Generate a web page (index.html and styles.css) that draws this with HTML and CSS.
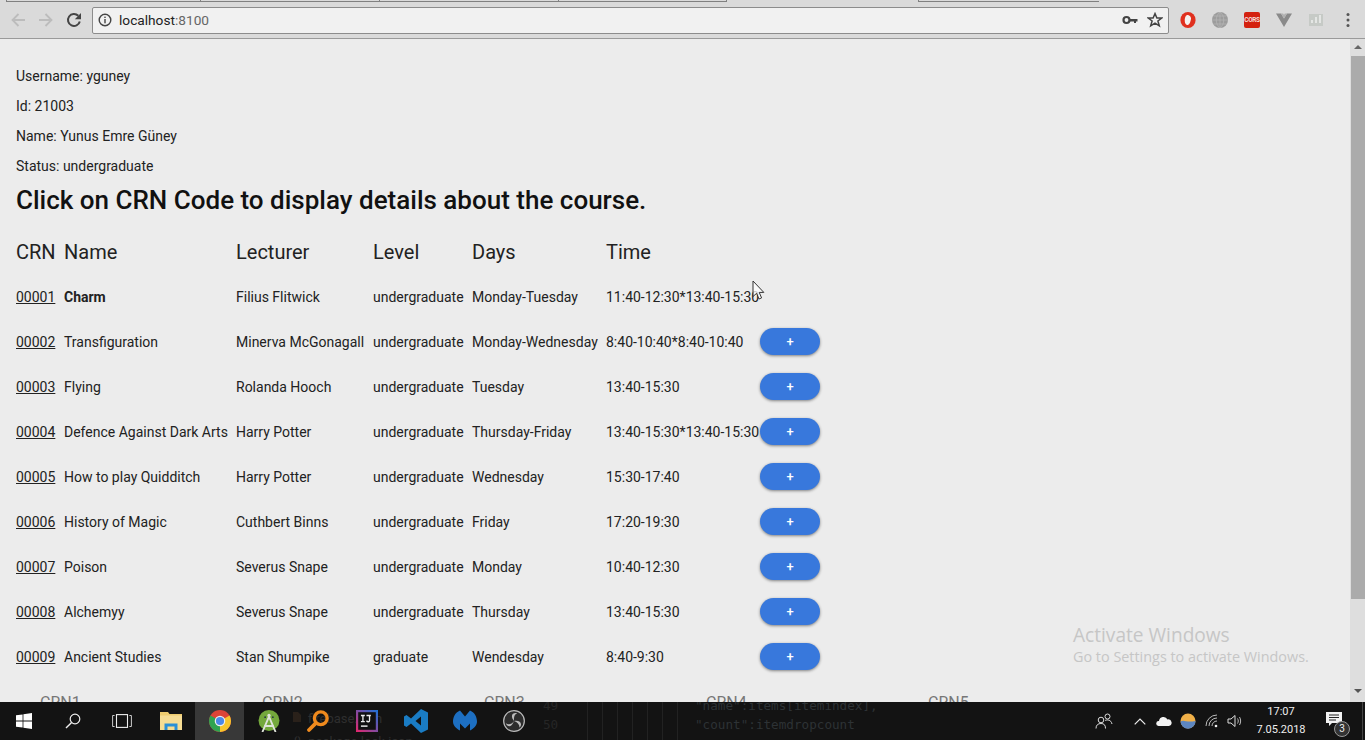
FILE: index.html
```html
<!DOCTYPE html>
<html>
<head>
  <title>Courses</title>
  <link rel="stylesheet" href="styles.css">
</head>
<body>
  <div class="tabstrip">
    <span class="tab tab-first"></span><span class="tab tab-wide"></span><span class="tab tab-wide"></span><span class="tab tab-short"></span>
    <span class="tab tab-last"></span>
  </div>

  <!-- browser toolbar -->
  <div class="toolbar">
    <div class="nav">
      <svg class="nav-icon" viewBox="0 0 16 16"><path d="M15 8H2.500M8.500 2L2.500 8L8.500 14" fill="none" stroke="#bcbcbc" stroke-width="1.800"/></svg>
      <svg class="nav-icon" viewBox="0 0 16 16"><path d="M1 8H13.500M7.500 2L13.500 8L7.500 14" fill="none" stroke="#bcbcbc" stroke-width="1.800"/></svg>
      <svg class="nav-icon" viewBox="0 0 16 16"><path d="M13.800 9.500A6 6 0 1 1 12.300 3.800" fill="none" stroke="#444" stroke-width="2"/><path d="M15 1V7.200H8.800Z" fill="#444"/></svg>
    </div>
    <div class="omnibox">
      <svg class="info-icon" viewBox="0 0 14 14"><circle cx="7" cy="7" r="5.800" fill="none" stroke="#444" stroke-width="1.400"/><rect x="6.300" y="6" width="1.400" height="4.300" fill="#444"/><rect x="6.300" y="3.600" width="1.400" height="1.400" fill="#444"/></svg>
      <span class="host">localhost</span><span class="port">:8100</span>
      <span class="omni-space"></span>
      <svg class="key-icon" viewBox="0 0 16 10"><circle cx="4.500" cy="5" r="3" fill="none" stroke="#444" stroke-width="2.200"/><path d="M7.500 4H15.500V6.500H14V8H12V6.500H7.500Z" fill="#444"/></svg>
      <svg class="star-icon" viewBox="0 0 16 16"><path d="M8 1.600L9.900 6H14.700L10.900 9L12.300 13.900L8 11.100L3.700 13.900L5.100 9L1.300 6H6.100Z" fill="none" stroke="#444" stroke-width="1.500"/></svg>
    </div>
    <div class="extensions">
      <svg class="ext" viewBox="0 0 16 16"><ellipse cx="8" cy="8" rx="7.600" ry="8" fill="#e0301e"/><path d="M7 3C5 4 4.500 7 4.800 9.500C5 12 6.500 13.500 8 13C10 12 10.500 9 11 7C11.500 5 9 2.500 7 3Z" fill="#f6f1ee"/></svg>
      <svg class="ext" viewBox="0 0 16 16"><circle cx="8" cy="8" r="8" fill="#9c9c9c"/><path d="M0 8H16M1.500 4H14.500M1.500 12H14.500M8 0V16M8 0C3 4 3 12 8 16M8 0C13 4 13 12 8 16" fill="none" stroke="#b8b8b8" stroke-width=".7"/></svg>
      <span class="cors">CORS</span>
      <svg class="ext" viewBox="0 0 16 16"><path d="M0 1.500H5L8 6.500L11 1.500H16L8 15Z" fill="#8a8a8a"/><path d="M5 1.500H7.200L8 3L8.800 1.500H11L8 6.500Z" fill="#b0b0b0"/></svg>
      <svg class="ext" viewBox="0 0 16 16"><rect x="1" y="2" width="14" height="12" fill="#c6cac6"/><path d="M3 11V8H5V11ZM7 11V5H9V11ZM11 11V3H13V11Z" fill="#e4e6e4"/></svg>
      <svg class="menu-dots" viewBox="0 0 4 16"><circle cx="2" cy="2.500" r="1.500" fill="#555"/><circle cx="2" cy="8" r="1.500" fill="#555"/><circle cx="2" cy="13.500" r="1.500" fill="#555"/></svg>
    </div>
  </div>

  <div class="viewport">
    <div class="content">
      <p class="info">Username: yguney</p>
      <p class="info">Id: 21003</p>
      <p class="info">Name: Yunus Emre Güney</p>
      <p class="info">Status: undergraduate</p>
      <h1 class="title">Click on CRN Code to display details about the course.</h1>

      <div class="course-grid head">
        <div>CRN</div><div>Name</div><div>Lecturer</div><div>Level</div><div>Days</div><div>Time</div><div></div>
      </div>

      <div class="course-grid row">
        <a class="crn" href="#">00001</a><div class="bold">Charm</div><div>Filius Flitwick</div><div>undergraduate</div><div>Monday-Tuesday</div><div class="nowrap">11:40-12:30*13:40-15:30</div><div></div>
      </div>
      <div class="course-grid row">
        <a class="crn" href="#">00002</a><div>Transfiguration</div><div>Minerva McGonagall</div><div>undergraduate</div><div>Monday-Wednesday</div><div class="nowrap">8:40-10:40*8:40-10:40</div><button class="add">+</button>
      </div>
      <div class="course-grid row">
        <a class="crn" href="#">00003</a><div>Flying</div><div>Rolanda Hooch</div><div>undergraduate</div><div>Tuesday</div><div>13:40-15:30</div><button class="add">+</button>
      </div>
      <div class="course-grid row">
        <a class="crn" href="#">00004</a><div>Defence Against Dark Arts</div><div>Harry Potter</div><div>undergraduate</div><div>Thursday-Friday</div><div class="nowrap">13:40-15:30*13:40-15:30</div><button class="add">+</button>
      </div>
      <div class="course-grid row">
        <a class="crn" href="#">00005</a><div>How to play Quidditch</div><div>Harry Potter</div><div>undergraduate</div><div>Wednesday</div><div>15:30-17:40</div><button class="add">+</button>
      </div>
      <div class="course-grid row">
        <a class="crn" href="#">00006</a><div>History of Magic</div><div>Cuthbert Binns</div><div>undergraduate</div><div>Friday</div><div>17:20-19:30</div><button class="add">+</button>
      </div>
      <div class="course-grid row">
        <a class="crn" href="#">00007</a><div>Poison</div><div>Severus Snape</div><div>undergraduate</div><div>Monday</div><div>10:40-12:30</div><button class="add">+</button>
      </div>
      <div class="course-grid row">
        <a class="crn" href="#">00008</a><div>Alchemyy</div><div>Severus Snape</div><div>undergraduate</div><div>Thursday</div><div>13:40-15:30</div><button class="add">+</button>
      </div>
      <div class="course-grid row">
        <a class="crn" href="#">00009</a><div>Ancient Studies</div><div>Stan Shumpike</div><div>graduate</div><div>Wendesday</div><div>8:40-9:30</div><button class="add">+</button>
      </div>

      <div class="drop-head">
        <span>CRN1</span><span>CRN2</span><span>CRN3</span><span>CRN4</span><span>CRN5</span>
      </div>
    </div>

    <div class="scrollbar">
      <span class="arrow-up"></span>
      <div class="thumb"></div>
      <span class="arrow-down"></span>
    </div>

    <!-- things lying over the page -->
    <svg class="cursor" viewBox="0 0 13 21"><path d="M1 1V16.500L4.600 13.300L7 19L9.600 17.900L7.200 12.400H11.800Z" fill="#fff" fill-opacity=".75" stroke="#333"/></svg>
    <div class="activate">
      <div class="activate-big">Activate Windows</div>
      <div class="activate-small">Go to Settings to activate Windows.</div>
    </div>
  </div>

  <div class="taskbar">
    <!-- the editor window shows through the taskbar -->
    <svg class="ghost-folder" viewBox="0 0 8 10"><path d="M0 0H5L8 3V10H0Z" fill="#2a211a"/></svg>
    <div class="behind behind-files">
      <div class="ghost-indent">firebase.json</div>
      <div>{} &nbsp;package-lock.json</div>
    </div>
    <div class="behind behind-lines">
      <div>49</div>
      <div>50</div>
    </div>
    <div class="behind-guides"></div>
    <div class="behind behind-code">
      <div>"name":items[itemindex],</div>
      <div>"count":itemdropcount</div>
    </div>

    <div class="task-left">
      <div class="task-cell">
        <svg class="win-logo" viewBox="0 0 16 16"><path d="M0 2.300L6.600 1.400V7.600H0ZM7.400 1.300L16 0V7.600H7.400ZM0 8.400H6.600V14.600L0 13.700ZM7.400 8.400H16V16L7.400 14.700Z" fill="#fff"/></svg>
      </div>
      <div class="task-cell">
        <svg class="search" viewBox="0 0 16 16"><circle cx="10" cy="6" r="4.800" fill="none" stroke="#eee" stroke-width="1.200"/><path d="M6.600 9.400L1 15" stroke="#eee" stroke-width="1.400"/></svg>
      </div>
      <div class="task-cell">
        <svg class="taskview" viewBox="0 0 20 14"><rect x="4.500" y=".6" width="11" height="12.800" fill="none" stroke="#eee" stroke-width="1.100"/><path d="M2.600 1.500H.6V12.500H2.600M17.400 1.500H19.400V12.500H17.400" fill="none" stroke="#ccc"/></svg>
      </div>
      <div class="task-cell">
        <svg class="folder" viewBox="0 0 22 18"><path d="M0 0H8L9.500 2H22V18H0Z" fill="#eecb6e"/><rect y="3.500" width="22" height="14.500" fill="#f6dc93"/><path d="M4.500 18V11.500H17.500V18H14.500V14.500H7.500V18Z" fill="#2a8fd6"/></svg>
      </div>
      <div class="task-cell task-active">
        <svg class="app-big" viewBox="0 0 20 20"><circle cx="10" cy="10" r="10" fill="#db4437"/><path d="M10 10L1.340 5A10 10 0 0 0 10 20Z" fill="#2fa350"/><path d="M10 10L10 20A10 10 0 0 0 18.660 5Z" fill="#f7c52c"/><circle cx="10" cy="10" r="4.800" fill="#eee"/><circle cx="10" cy="10" r="3.700" fill="#4a88e8"/></svg>
      </div>
      <div class="task-cell">
        <svg class="app-big" viewBox="0 0 20 20"><circle cx="10" cy="9.500" r="9.500" fill="#74a83c"/><path d="M10 6L4 20M10 6L16 20M5.500 14.500H14.500" fill="none" stroke="#dfe3da" stroke-width="1.700"/><circle cx="10" cy="5" r="1.500" fill="#dfe3da"/><circle cx="6.500" cy="6.500" r=".8" fill="#234"/><circle cx="13.500" cy="6.500" r=".8" fill="#234"/></svg>
      </div>
      <div class="task-cell">
        <svg class="app-big" viewBox="0 0 20 20"><circle cx="12.500" cy="7.500" r="5.800" fill="none" stroke="#f08a1d" stroke-width="3"/><path d="M7.800 12.200L1.800 18.200" stroke="#f08a1d" stroke-width="3.400" stroke-linecap="round"/></svg>
      </div>
      <div class="task-cell">
        <svg class="app-big" viewBox="0 0 20 20"><defs><linearGradient id="ij" x1="0" y1="1" x2="1" y2="0"><stop offset="0" stop-color="#e6246a"/><stop offset="1" stop-color="#1a73d8"/></linearGradient></defs><rect width="20" height="20" fill="url(#ij)"/><rect x="2" y="2" width="16" height="16" fill="#111"/><rect x="4.500" y="14" width="6" height="1.300" fill="#eee"/><path d="M4.500 5H8M6.300 5V10.500M4.500 10.500H8M9.500 5H13.500M12.300 5V9.500C12.300 11 10.500 11 9.500 9.800" fill="none" stroke="#eee" stroke-width="1.200"/></svg>
      </div>
      <div class="task-cell">
        <svg class="app-vs" viewBox="0 0 24 24"><path d="M17 0L24 3.500V20.500L17 24L7 14.500L2.500 18L0 16.500V7.500L2.500 6L7 9.500ZM17 7.500L11.500 12L17 16.500Z" fill="#1a7cc4"/></svg>
      </div>
      <div class="task-cell">
        <svg class="app-vs" viewBox="0 0 24 21"><path d="M7 0C2 2 0 7 0 11C0 15 3 18 7 20V13L12 18L17 13V20C21 18 24 15 24 11C24 7 22 2 17 0L12 6Z" fill="#1d6fc2"/></svg>
      </div>
      <div class="task-cell">
        <svg class="app-big" viewBox="0 0 20 20"><circle cx="10" cy="10" r="9.400" fill="#2c2c2c" stroke="#bbb" stroke-width="1.100"/><path d="M10 10C6 5 9 2 13 3C10 4 10 7 10 10ZM10 10C16 9 18 13 15 16C15 13 13 11 10 10ZM10 10C8 16 4 16 2.500 12C5 14 8 13 10 10Z" fill="#bbb"/></svg>
      </div>
    </div>

    <div class="tray">
      <svg class="tray-people" viewBox="0 0 18 16"><circle cx="6" cy="7" r="2.800" fill="none" stroke="#ddd"/><path d="M1 15.500C1 12 3 10.500 6 10.500C9 10.500 10.500 12 10.500 15.500" fill="none" stroke="#ddd"/><circle cx="12.500" cy="3.500" r="2.500" fill="none" stroke="#ddd"/><path d="M10 7.500C12 6.500 16 6.500 17 11" fill="none" stroke="#ddd"/></svg>
      <svg class="tray-chevron" viewBox="0 0 12 7"><path d="M.7 6.300L6 1L11.300 6.300" fill="none" stroke="#eee" stroke-width="1.200"/></svg>
      <svg class="tray-cloud" viewBox="0 0 16 10"><path d="M2.500 10A2.500 2.500 0 0 1 3 5A4.500 4.500 0 0 1 11.500 3.500A3.300 3.300 0 0 1 13 10Z" fill="#f2f2f2"/></svg>
      <svg class="tray-ball" viewBox="0 0 16 16"><circle cx="8" cy="8" r="7.500" fill="#f0b048"/><path d="M.5 8.500C4 6 6 10 15.500 8A7.500 7.500 0 0 1 .5 8.500Z" fill="#5d86c0"/></svg>
      <svg class="tray-wifi" viewBox="0 0 16 14"><path d="M1 12A11 11 0 0 1 12 1M4 12A8 8 0 0 1 12 4M7 12A5 5 0 0 1 12 7" fill="none" stroke="#bbb"/><circle cx="11" cy="12" r="1.300" fill="#eee"/></svg>
      <svg class="tray-sound" viewBox="0 0 16 14"><path d="M1 5H4L8 1.500V12.500L4 9H1Z" fill="none" stroke="#ddd"/><path d="M10.500 4.500C11.500 6 11.500 8 10.500 9.500M12.500 3C14 5.500 14 8.500 12.500 11" fill="none" stroke="#bbb"/></svg>
      <div class="clock"><div>17:07</div><div>7.05.2018</div></div>
      <div class="notify">
        <svg class="notify-icon" viewBox="0 0 16 14"><path d="M0 0H16V11H6L3 14V11H0Z" fill="#f2f2f2"/><path d="M3 3H13M3 5.500H13M3 8H10" stroke="#222"/></svg>
        <span class="notify-badge">3</span>
      </div>
    </div>
  </div>
</body>
</html>
```

FILE: styles.css
```css
/* Global styles */
html, body {
  height: 100%;
}

body {
  margin: 0;
  display: flex;
  flex-direction: column;
  height: 740px;
  overflow: hidden;
  background-color: #ececec;
  color: #222;
  font-family: Roboto, "Liberation Sans", sans-serif;
  font-size: 14px;
}

/* top of the browser */
.tabstrip {
  height: 2px;
  background-color: #dadada;
  display: flex;
}

.tab {
  display: block;
  height: 1px;
  box-sizing: content-box;
  border-bottom: 1px solid #808080;
  border-right: 1px solid #808080;
}

.tab-first {
  width: 193px;
  margin-left: 6px;
  border-left: 1px solid #808080;
}

.tab-wide {
  width: 178px;
}

.tab-short {
  width: 167px;
}

.tab-last {
  width: 180px;
  margin-left: 191px;
  border-left: 1px solid #808080;
  border-right: none;
}

.toolbar {
  height: 36px;
  display: flex;
  align-items: center;
  background-color: #dadada;
  border-bottom: 1px solid #9a9a9a;
}

.nav {
  display: flex;
  align-items: center;
  gap: 12px;
  padding-left: 10px;
  width: 83px;
  box-sizing: border-box;
}

.nav-icon {
  width: 16px;
  height: 16px;
}

.omnibox {
  width: 1077px;
  height: 27px;
  box-sizing: border-box;
  margin-left: 9px;
  display: flex;
  align-items: center;
  background-color: #f1f1f1;
  border: 1px solid #8c8c8c;
  border-radius: 2px;
  padding: 0 5px;
  font-size: 13.7px;
}

.info-icon {
  width: 14px;
  height: 14px;
  margin-right: 7px;
}

.host {
  color: #222;
}

.port {
  color: #666;
}

.omni-space {
  flex: 1;
}

.key-icon {
  width: 16px;
  height: 10px;
  margin-right: 9px;
}

.star-icon {
  width: 16px;
  height: 16px;
}

.extensions {
  display: flex;
  align-items: center;
  padding-left: 11px;
  gap: 16px;
}

.ext {
  width: 16px;
  height: 16px;
}

.cors {
  width: 16px;
  height: 16px;
  background-color: #d4210f;
  border-radius: 2px;
  color: #f5dcd8;
  font-size: 6.5px;
  font-weight: bold;
  letter-spacing: -0.4px;
  line-height: 16px;
  text-align: center;
}

.menu-dots {
  width: 4px;
  height: 16px;
  margin-left: 6px;
}

/* page area */
.viewport {
  position: relative;
  flex: 1;
  display: flex;
  overflow: hidden;
  min-height: 0;
}

.content {
  flex: 1;
  padding: 29px 16px 0;
  overflow: hidden;
}

.info {
  margin: 0 0 14px;
  line-height: 16px;
}

.title {
  margin: -3px 0 0;
  color: #111;
  font-size: 26px;
  font-weight: 500;
  line-height: 30px;
}

.course-grid {
  display: grid;
  grid-template-columns: 48px 172px 137px 99px 134px 154px 60px;
  align-items: center;
}

.head {
  height: 45px;
  margin-top: 14px;
  font-size: 20px;
}

.row {
  height: 45px;
}

.crn {
  color: #222;
  text-decoration: underline;
}

.bold {
  font-weight: bold;
}

.nowrap {
  white-space: nowrap;
}

.add {
  width: 60px;
  height: 27px;
  padding: 0;
  border: none;
  border-radius: 14px;
  background-color: #3878dc;
  color: #fff;
  font-family: inherit;
  font-size: 13px;
  font-weight: 500;
  box-shadow: 0 1px 3px rgba(0, 0, 0, 0.45);
}

.drop-head {
  display: flex;
  padding-left: 24px;
  margin-top: 14px;
  font-size: 16px;
  color: #777;
}

.drop-head span {
  width: 222px;
}

/* scrollbar */
.scrollbar {
  width: 15px;
  background-color: #dedede;
  display: flex;
  flex-direction: column;
  align-items: center;
}

.arrow-up {
  margin-top: 6px;
  border-left: 4px solid transparent;
  border-right: 4px solid transparent;
  border-bottom: 4px solid #666;
}

.thumb {
  width: 14px;
  height: 543px;
  margin-top: 7px;
  margin-left: 1px;
  background-color: #ababab;
}

.arrow-down {
  margin-top: 90px;
  border-left: 4px solid transparent;
  border-right: 4px solid transparent;
  border-top: 4px solid #555;
}

.cursor {
  position: absolute;
  left: 752px;
  top: 241px;
  width: 13px;
  height: 21px;
}

.activate {
  position: absolute;
  left: 1073px;
  top: 584px;
  color: #c6c6c6;
  font-family: "Open Sans", sans-serif;
}

.activate-big {
  font-size: 19.1px;
  line-height: 25px;
}

.activate-small {
  font-size: 14.4px;
  line-height: 20px;
  margin-top: -1px;
}

/* windows taskbar */
.taskbar {
  position: relative;
  height: 38px;
  display: flex;
  justify-content: space-between;
  overflow: hidden;
  background-color: #131313;
  color: #eee;
}

.task-left {
  position: relative;
  display: flex;
  margin-left: -1px;
}

.task-cell {
  width: 49px;
  height: 38px;
  display: flex;
  align-items: center;
  justify-content: center;
}

.task-active {
  background-color: #383838;
}

.win-logo,
.search {
  width: 16px;
  height: 16px;
}

.taskview {
  width: 20px;
  height: 14px;
}

.folder {
  width: 22px;
  height: 18px;
}

.app-big {
  width: 22px;
  height: 22px;
}

.app-vs {
  width: 24px;
  height: 24px;
}

/* dim editor text behind the taskbar */
.behind {
  position: absolute;
  color: #2e2e2e;
  white-space: nowrap;
}

.behind-files {
  left: 293px;
  top: 5px;
  font-size: 13px;
  line-height: 23px;
}

.ghost-indent {
  padding-left: 15px;
}

.ghost-folder {
  position: absolute;
  left: 293px;
  top: 10px;
  width: 8px;
  height: 10px;
}

.behind-lines,
.behind-code {
  top: -6px;
  font-family: "DejaVu Sans Mono", monospace;
  font-size: 12.65px;
  line-height: 19px;
}

.behind-lines {
  left: 543px;
  color: #262626;
}

.behind-code {
  left: 695px;
  color: #2d3235;
}

.behind-guides {
  position: absolute;
  left: 587px;
  top: 0;
  width: 92px;
  height: 38px;
  background: repeating-linear-gradient(90deg, #222 0, #222 1px, transparent 1px, transparent 15px);
}

.tray {
  position: relative;
  display: flex;
  align-items: center;
}

.tray-people {
  width: 18px;
  height: 16px;
  margin-right: 21px;
}

.tray-chevron {
  width: 12px;
  height: 7px;
  margin-right: 10px;
}

.tray-cloud {
  width: 16px;
  height: 10px;
  margin-right: 8px;
}

.tray-ball {
  width: 16px;
  height: 16px;
  margin-right: 9px;
}

.tray-wifi {
  width: 16px;
  height: 14px;
  margin-right: 6px;
}

.tray-sound {
  width: 16px;
  height: 14px;
  margin-right: 10px;
}

.clock {
  width: 56px;
  text-align: center;
  font-size: 11px;
  line-height: 18px;
}

.notify {
  position: relative;
  width: 36px;
  height: 38px;
  padding-left: 17px;
  margin-right: 2px;
  box-sizing: content-box;
  display: flex;
  align-items: center;
  border-right: 1px solid #444;
}

.notify-icon {
  width: 16px;
  height: 14px;
  margin-top: -5px;
}

.notify-badge {
  position: absolute;
  left: 25px;
  top: 19px;
  width: 14px;
  height: 14px;
  border-radius: 50%;
  border: 1px solid #999;
  background-color: #333;
  font-size: 10px;
  line-height: 14px;
  text-align: center;
}
```
